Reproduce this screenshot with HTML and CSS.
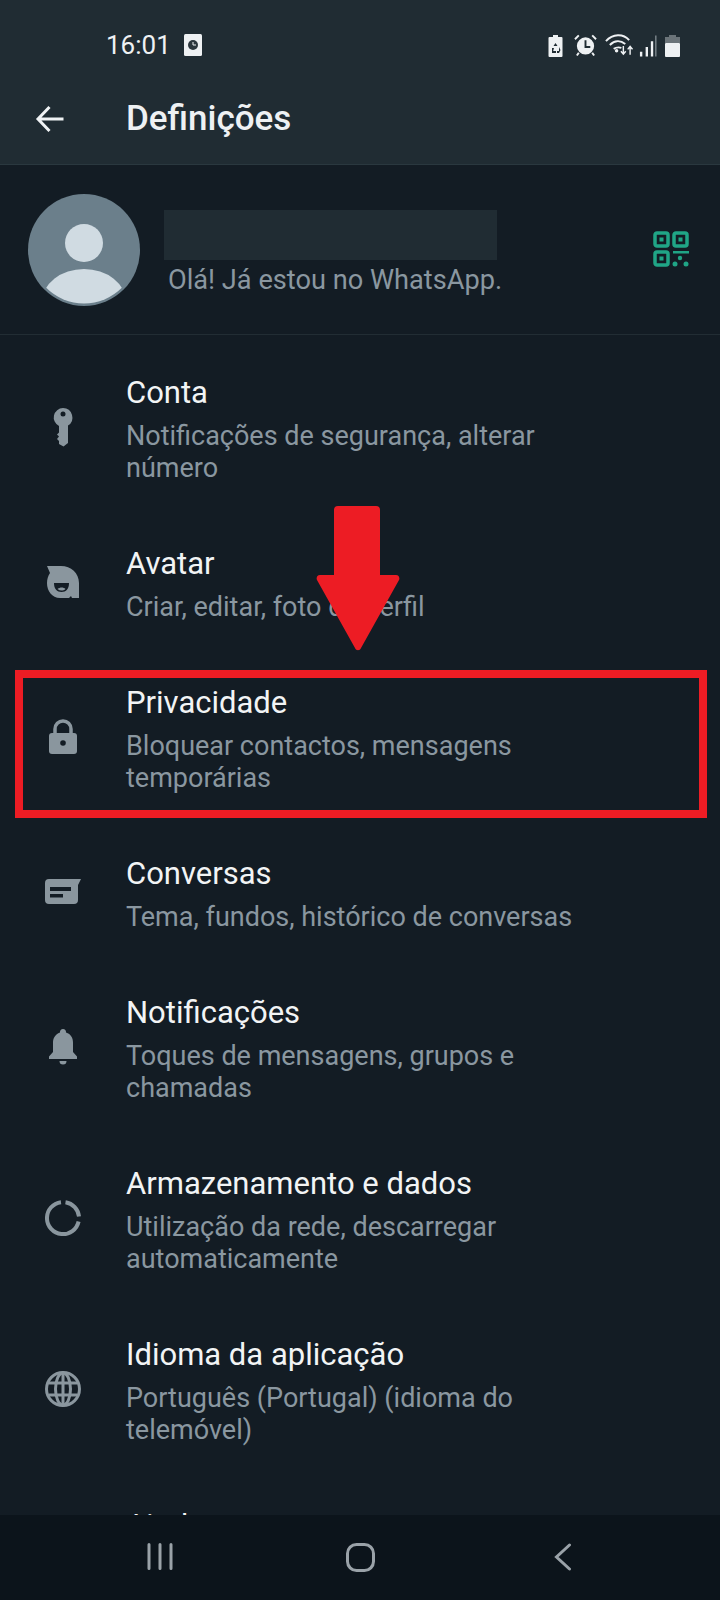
FILE: index.html
```html
<!DOCTYPE html>
<html>
<head>
    <title>Definições</title>
    <link rel="stylesheet" href="styles.css">
</head>
<body>
    <div class="phone">
        <div class="topbar">
            <div class="status">
                <span class="clock">16:01</span>
                <svg class="status-app" viewBox="0 0 18 22">
                    <rect width="18" height="22" rx="1.5" fill="#eef1f3"/>
                    <circle cx="9" cy="11" r="5" fill="#2b363d"/>
                    <path d="M9 8v3h3" fill="none" stroke="#eef1f3" stroke-width="1"/>
                </svg>
                <div class="status-right">
                    <svg class="status-saver" width="15" height="22" viewBox="0 0 15 22">
                        <path d="M5 0h5v2h3.500a1 1 0 0 1 1 1v18a1 1 0 0 1-1 1H1.500a1 1 0 0 1-1-1V3a1 1 0 0 1 1-1H5z" fill="#eef1f3"/>
                        <path d="M7.500 8l2 3h-4zM4 13l2 0-.8 3H8v2H4zM11 12l1.500 3-1.500 3H9v-2h2z" fill="#202c33"/>
                    </svg>
                    <svg width="23" height="23" viewBox="0 0 24 23">
                        <circle cx="12" cy="12" r="9" fill="#eef1f3"/>
                        <path d="M12 6v7h5" fill="none" stroke="#202c33" stroke-width="2"/>
                        <path d="M1 5l4-4M23 5l-4-4M5 19l-2 3M19 19l2 3" stroke="#eef1f3" stroke-width="2" fill="none"/>
                    </svg>
                    <svg class="status-wifi" width="28" height="23" viewBox="0 0 29 23">
                        <path d="M1 7C8-1 19-1 25 6M5 11c5-5 11-5 16-1M9 15c3-2 5-2 8-1" fill="none" stroke="#eef1f3" stroke-width="2"/>
                        <circle cx="12" cy="17" r="1.800" fill="#eef1f3"/>
                        <path d="M19 12v8M16.500 17.500l2.500 3 2.500-3M26 21v-8M23.500 15.500l2.500-3 2.500 3" fill="none" stroke="#eef1f3" stroke-width="1.500"/>
                    </svg>
                    <svg width="18" height="22" viewBox="0 0 19 22">
                        <path d="M1 22v-5h2.500v5zM7 22V12h2.500v10zM12.500 22V6H15v16z" fill="#eef1f3"/>
                        <path d="M17 22V0h1.500v22z" fill="#7c868c"/>
                    </svg>
                    <svg width="15" height="22" viewBox="0 0 15 22">
                        <path d="M4 0h7v2h4v6H0V2h4z" fill="#6b7479"/>
                        <rect y="8" width="15" height="14" rx="1" fill="#eef1f3"/>
                    </svg>
                </div>
            </div>
            <div class="appbar">
                <svg class="back" viewBox="0 0 28 28">
                    <path d="M28 14H3M14 2L2.500 14 14 26" fill="none" stroke="#f0f3f5" stroke-width="3"/>
                </svg>
                <h1>Definições</h1>
            </div>
        </div>

        <div class="profile">
            <svg class="avatar" viewBox="0 0 112 112">
                <defs>
                    <clipPath id="avatarClip"><circle cx="56" cy="56" r="53.500"/></clipPath>
                </defs>
                <circle cx="56" cy="56" r="56" fill="#6b7f8b"/>
                <circle cx="56" cy="49" r="19" fill="#d0dbe2"/>
                <ellipse cx="56" cy="108" rx="42" ry="33" fill="#d0dbe2" clip-path="url(#avatarClip)"/>
            </svg>
            <div class="profile-text">
                <div class="name-block"></div>
                <div class="about">Olá! Já estou no WhatsApp.</div>
            </div>
            <svg class="qr" viewBox="0 0 36 36">
                <g fill="none" stroke="#20a586" stroke-width="3.500">
                    <rect x="2" y="2" width="13" height="13" rx="2"/>
                    <rect x="21" y="2" width="13" height="13" rx="2"/>
                    <rect x="2" y="21" width="13" height="13" rx="2"/>
                </g>
                <g fill="#20a586">
                    <rect x="6.500" y="6.500" width="4" height="4"/>
                    <rect x="25.500" y="6.500" width="4" height="4"/>
                    <rect x="6.500" y="25.500" width="4" height="4"/>
                    <rect x="20" y="20" width="16" height="2.500"/>
                    <circle cx="27" cy="27" r="2.200"/>
                    <circle cx="22" cy="33" r="2.500"/>
                    <circle cx="33" cy="33" r="2.500"/>
                </g>
            </svg>
        </div>

        <div class="list">
            <div class="row">
                <svg class="row-icon" viewBox="0 0 36 40">
                    <path d="M18 1a9.500 9.500 0 0 1 5 17.500V36l-4.500 3.500-4.500-2.500v-3l-2-2 2-2.500-2-2 2-2v-6.500A9.500 9.500 0 0 1 18 1z" fill="#8a969e"/>
                    <circle cx="18" cy="7" r="2.500" fill="#131c24"/>
                </svg>
                <div class="row-text">
                    <div class="row-title">Conta</div>
                    <div class="row-sub">Notificações de segurança, alterar número</div>
                </div>
            </div>
            <div class="row row-one">
                <svg class="row-icon" viewBox="0 0 36 40">
                    <path d="M2 3h14c10 0 18 7 18 17v15h-7l-1-2-2 2H15C7 35 2 28 2 20c0-4 1-7 3-10z" fill="#8a969e"/>
                    <path d="M9 20h15c0 6-3 9-7.500 9S9 26 9 20z" fill="#131c24"/>
                    <path d="M12.500 26c2.500-2 6-2 8 0-2.500 2-5.500 2-8 0z" fill="#8a969e"/>
                </svg>
                <div class="row-text">
                    <div class="row-title">Avatar</div>
                    <div class="row-sub">Criar, editar, foto de perfil</div>
                </div>
            </div>
            <div class="row">
                <svg class="row-icon" viewBox="0 0 36 40">
                    <path d="M10 17v-5a8 8 0 0 1 16 0v5" fill="none" stroke="#8a969e" stroke-width="3.500"/>
                    <rect x="4" y="16" width="28" height="21" rx="3" fill="#8a969e"/>
                    <circle cx="18" cy="26" r="2.800" fill="#131c24"/>
                </svg>
                <div class="row-text">
                    <div class="row-title">Privacidade</div>
                    <div class="row-sub">Bloquear contactos, mensagens temporárias</div>
                </div>
            </div>
            <div class="row row-one">
                <svg class="row-icon" viewBox="0 0 36 40">
                    <path d="M4 6h32l-3 6v15a4 4 0 0 1-4 4H4a4 4 0 0 1-4-4V10a4 4 0 0 1 4-4z" fill="#8a969e"/>
                    <path d="M5 14h21v4H5zM5 21h13v3.500H5z" fill="#131c24"/>
                </svg>
                <div class="row-text">
                    <div class="row-title">Conversas</div>
                    <div class="row-sub">Tema, fundos, histórico de conversas</div>
                </div>
            </div>
            <div class="row">
                <svg class="row-icon" viewBox="0 0 36 40">
                    <path d="M18 2a3 3 0 0 1 3 3.500c5 1.500 7 5.500 7 10V25l4 4.500V32H4v-2.500L8 25v-9.500c0-4 2-8 7-10A3 3 0 0 1 18 2z" fill="#8a969e"/>
                    <path d="M14.500 34h7a3.500 3.500 0 0 1-7 0z" fill="#8a969e"/>
                </svg>
                <div class="row-text">
                    <div class="row-title">Notificações</div>
                    <div class="row-sub">Toques de mensagens, grupos e chamadas</div>
                </div>
            </div>
            <div class="row">
                <svg class="row-icon" viewBox="0 0 36 40">
                    <g fill="none" stroke="#8a969e" stroke-width="4">
                        <path d="M16 4.200A16 16 0 1 0 33.600 23.500"/>
                        <path d="M20.500 4.200A16 16 0 0 1 34 18.500"/>
                    </g>
                </svg>
                <div class="row-text">
                    <div class="row-title">Armazenamento e dados</div>
                    <div class="row-sub">Utilização da rede, descarregar automaticamente</div>
                </div>
            </div>
            <div class="row">
                <svg class="row-icon" viewBox="0 0 36 40">
                    <g fill="none" stroke="#8a969e" stroke-width="3">
                        <circle cx="18" cy="20" r="16.500"/>
                        <ellipse cx="18" cy="20" rx="7.500" ry="16"/>
                        <path d="M4 14h28M4 26h28M18 4v32"/>
                    </g>
                </svg>
                <div class="row-text">
                    <div class="row-title">Idioma da aplicação</div>
                    <div class="row-sub">Português (Portugal) (idioma do telemóvel)</div>
                </div>
            </div>
            <div class="row">
                <div class="row-text row-text-only">
                    <div class="row-title">Ajuda</div>
                </div>
            </div>
        </div>

        <div class="navbar">
            <svg width="26" height="27" viewBox="0 0 26 27">
                <path d="M2 1.500v24M13 1.500v24M24 1.500v24" stroke="#9aa2a8" stroke-width="3" stroke-linecap="round" fill="none"/>
            </svg>
            <svg class="nav-home" width="29" height="29" viewBox="0 0 29 29">
                <rect x="1.500" y="1.500" width="26" height="26" rx="9" fill="none" stroke="#9aa2a8" stroke-width="3"/>
            </svg>
            <svg width="18" height="28" viewBox="0 0 18 28">
                <path d="M15.500 2L2.500 14l13 12" fill="none" stroke="#9aa2a8" stroke-width="3" stroke-linecap="round"/>
            </svg>
        </div>

        <!-- highlight drawn over the list -->
        <div class="highlight"></div>
        <svg class="pointer" viewBox="0 0 84 146">
            <path d="M22 0h38a4 4 0 0 1 4 4v65h16c3 0 4 3 3 5L45 142c-1 3-5 3-6 0L1 74c-1-2 0-5 3-5h14V4a4 4 0 0 1 4-4z" fill="#ed1c24"/>
        </svg>
    </div>
</body>
</html>
```

FILE: styles.css
```css
* {
    box-sizing: border-box;
}

body {
    margin: 0;
    background-color: #131c24;
    font-family: Roboto, "Liberation Sans", sans-serif;
}

.phone {
    position: relative;
    width: 720px;
    height: 1600px;
    display: flex;
    flex-direction: column;
    overflow: hidden;
}

/* Top bar */
.topbar {
    height: 165px;
    flex: none;
    background-color: #202c33;
    border-bottom: 1px solid #2a383f;
}

.status {
    height: 88px;
    padding: 31px 40px 0 106px;
    display: flex;
    align-items: flex-start;
    color: #eef1f3;
}

.clock {
    font-size: 26px;
    line-height: 28px;
    width: 78px;
}

.status-app {
    width: 18px;
    height: 22px;
    margin-top: 3px;
}

.status-right {
    margin-left: auto;
    margin-top: 3px;
    display: flex;
    align-items: flex-end;
    gap: 8px;
}

.status-saver {
    margin-right: 3px;
}

.status-wifi {
    margin-right: -2px;
}

.appbar {
    display: flex;
    align-items: center;
    padding-left: 35px;
    padding-top: 3px;
}

.back {
    width: 29px;
    height: 28px;
    flex: none;
}

.appbar h1 {
    margin: 0 0 0 62px;
    font-size: 35px;
    line-height: 56px;
    font-weight: 500;
    color: #eef1f3;
}

/* Profile */
.profile {
    height: 170px;
    flex: none;
    display: flex;
    align-items: flex-start;
    padding: 29px 31px 0 28px;
    border-bottom: 1px solid #222d34;
}

.avatar {
    width: 112px;
    height: 112px;
    flex: none;
}

.profile-text {
    margin-left: 24px;
    padding-top: 16px;
}

.name-block {
    width: 333px;
    height: 50px;
    background-color: #202c33;
}

.about {
    margin-left: 4px;
    margin-top: 4px;
    font-size: 27.200px;
    line-height: 32px;
    color: #8a97a0;
}

.qr {
    width: 36px;
    height: 36px;
    margin-left: auto;
    margin-top: 37px;
}

/* Settings list */
.list {
    flex: 1;
    min-height: 0;
    overflow: hidden;
}

.row {
    height: 171px;
    display: flex;
    padding-top: 31px;
}

.row-one {
    height: 139px;
}

.row-icon {
    width: 36px;
    height: 40px;
    flex: none;
    margin: 41px 0 0 45px;
}

.row-one .row-icon {
    margin-top: 26px;
}

.row-text {
    margin-left: 45px;
    width: 450px;
}

.row-text-only {
    margin-left: 126px;
}

.row-title {
    font-size: 31px;
    line-height: 54px;
    color: #f2f4f5;
}

.row-sub {
    font-size: 27px;
    line-height: 32px;
    color: #8a97a0;
}

/* Bottom navigation */
.navbar {
    height: 85px;
    flex: none;
    background-color: #0c141b;
    display: flex;
    align-items: flex-start;
    justify-content: space-between;
    padding: 28px 148px 0 147px;
}

.nav-home {
    margin-right: 6px;
}

/* Red marking over the Privacidade row */
.highlight {
    position: absolute;
    left: 15px;
    top: 670px;
    width: 692px;
    height: 148px;
    border: 8px solid #ed1c24;
}

.pointer {
    position: absolute;
    left: 316px;
    top: 506px;
    width: 84px;
    height: 146px;
}
```
